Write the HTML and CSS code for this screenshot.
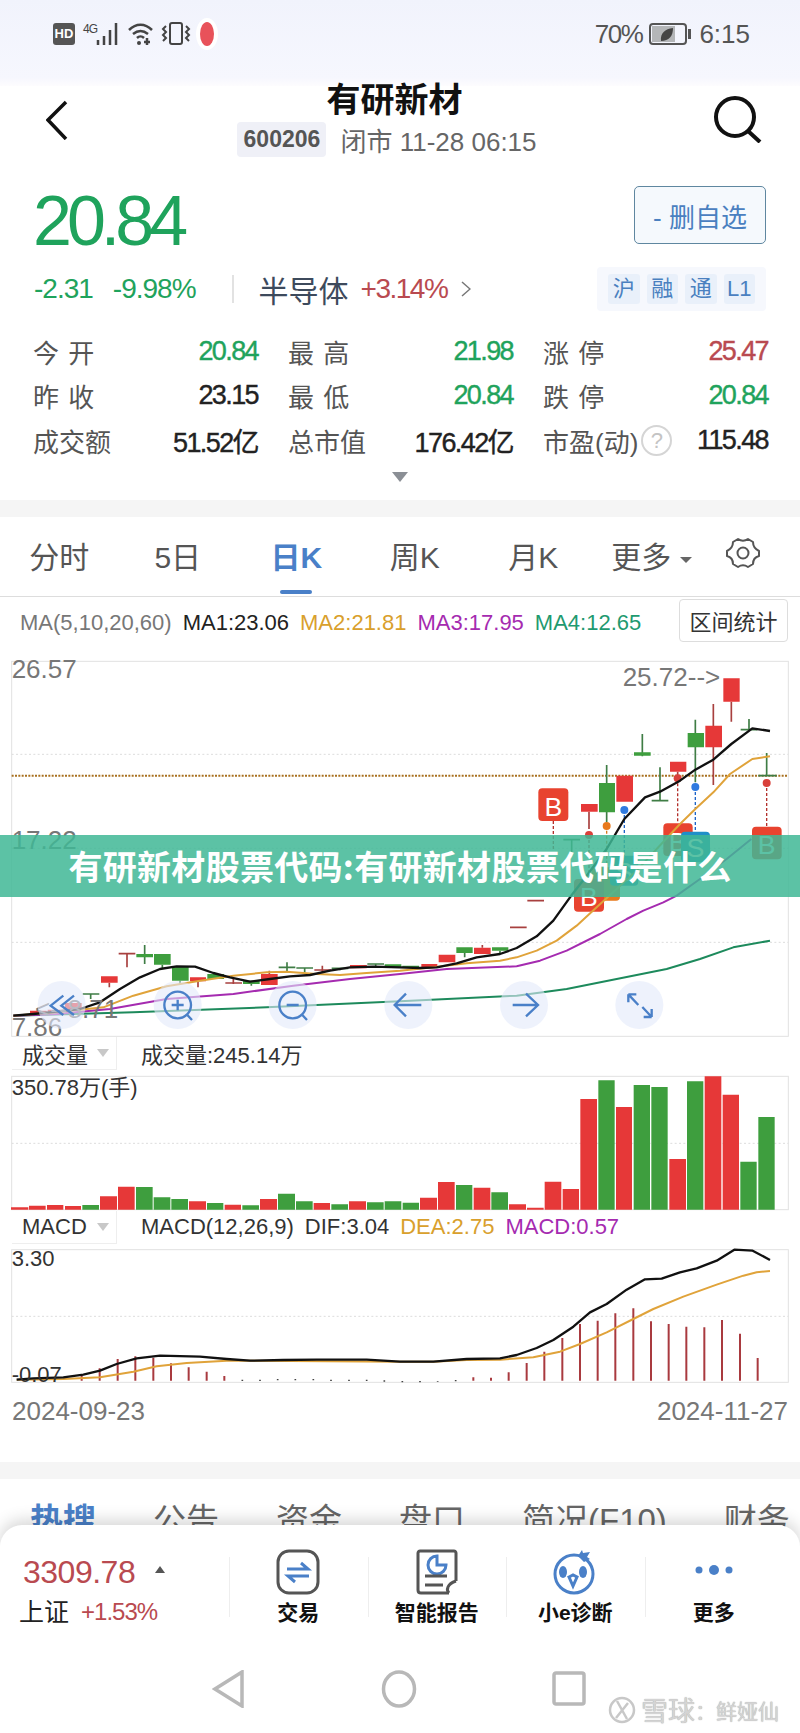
FILE: index.html
```html
<!DOCTYPE html>
<html lang="zh-CN">
<head>
  <meta charset="UTF-8">
  <meta name="viewport" content="width=device-width, initial-scale=1.0">
  <title>有研新材</title>
  <link rel="stylesheet" href="styles.css">
</head>
<body>
  <div id="page">
    <div class="status">
      <div class="status-left">
        <span class="hd">HD</span>
        <span class="net">4G</span>
        <svg class="signal" width="25" height="24" viewBox="0 0 25 24"><path d="M2 18v5M8 14v9M14 8v15M20 1v22" /></svg>
        <svg class="wifi" width="27" height="24" viewBox="0 0 27 24"><path d="M2 8c7-7 16-7 23 0M6 12c5-4 10-4 15 0M10 16c2-2 5-2 7 0" /><circle cx="12" cy="21" r="2" /><path d="M20 16v7M17 20h6" /></svg>
        <svg class="vibrate" width="30" height="24" viewBox="0 0 30 24"><rect x="9" y="1" width="12" height="21" rx="2" /><path d="M5 4l-3 3 3 3-3 3 3 3-3 3M25 4l3 3-3 3 3 3-3 3 3 3" /></svg>
        <span class="blob"></span>
      </div>
      <div class="status-right">
        <span class="batt-pct">70%</span>
        <svg width="43" height="24" viewBox="0 0 43 24"><rect x="1" y="2" width="36" height="20" rx="3" class="bat-box" /><rect x="3" y="4" width="23" height="16" fill="#b4b6b8" /><path d="M12 19c-1-8 4-12 12-13 0 8-4 13-12 13z" fill="#444" /><rect x="39" y="7" width="3" height="10" fill="#555" /></svg>
        <span class="clock">6:15</span>
      </div>
    </div>

    <div class="topbar">
      <svg class="back" width="22" height="40" viewBox="0 0 22 40"><path d="M20 2L2 20l18 19" /></svg>
      <div class="heading">
        <h1>有研新材</h1>
        <div class="sub"><span class="code">600206</span><span>闭市 11-28 06:15</span></div>
      </div>
      <svg class="search" width="50" height="48" viewBox="0 0 50 48"><circle cx="22" cy="22" r="19" /><path d="M35 36l12 11" /></svg>
    </div>

    <div class="quote">
      <div class="price-row">
        <div class="price">20.84</div>
        <button class="watch">- 删自选</button>
      </div>
      <div class="change-row">
        <div class="change">
          <span class="green">-2.31</span>
          <span class="green pct">-9.98%</span>
          <i class="vline"></i>
          <span class="sector">半导体</span>
          <span class="red sector-pct">+3.14%</span>
          <svg width="10" height="16" viewBox="0 0 10 16" class="more-arrow"><path d="M1 1l8 7-8 7" /></svg>
        </div>
        <div class="tags"><span>沪</span><span>融</span><span>通</span><span>L1</span></div>
      </div>
    </div>

    <div class="stats">
      <div class="stat"><span class="spaced">今 开</span><b class="green">20.84</b></div>
      <div class="stat"><span class="spaced">最 高</span><b class="green">21.98</b></div>
      <div class="stat"><span class="spaced">涨 停</span><b class="red">25.47</b></div>
      <div class="stat"><span class="spaced">昨 收</span><b>23.15</b></div>
      <div class="stat"><span class="spaced">最 低</span><b class="green">20.84</b></div>
      <div class="stat"><span class="spaced">跌 停</span><b class="green">20.84</b></div>
      <div class="stat"><span>成交额</span><b>51.52亿</b></div>
      <div class="stat"><span>总市值</span><b>176.42亿</b></div>
      <div class="stat"><span>市盈(动)<i class="help">?</i></span><b>115.48</b></div>
    </div>
    <div class="expand"><i></i></div>
    <div class="band"></div>

    <div class="tabs">
      <span class="tab">分时</span>
      <span class="tab">5日</span>
      <span class="tab active">日K</span>
      <span class="tab">周K</span>
      <span class="tab">月K</span>
      <span class="tab">更多<i class="caret"></i></span>
      <svg class="gear" width="36" height="34" viewBox="0 0 36 34"><path d="M13 3c3 2 7 2 10 0l5 3c0 4 2 7 6 9v5c-4 1-6 4-6 8l-5 3c-3-2-7-2-10 0l-5-3c0-4-2-7-6-8v-5c4-2 6-5 6-9z" /><circle cx="18" cy="17" r="5.5" /></svg>
    </div>

    <div class="ma-row">
      <span class="gray">MA(5,10,20,60)</span>
      <span>MA1:23.06</span>
      <span class="c-orange">MA2:21.81</span>
      <span class="c-purple">MA3:17.95</span>
      <span class="c-teal">MA4:12.65</span>
      <button class="range">区间统计</button>
    </div>

    <svg class="chart main-chart" viewBox="0 0 2400 1164">
      <rect class="frame" x="35" y="37" width="2330" height="1125" />
      <path class="grid" d="M35 316H2365M35 598H2365M35 880H2365" />
      <path class="limit" d="M35 380H2365" />

      <path class="wick-r" d="M328 1001V1015M381 914V955M594 997V1015M700 985V1005M808 965V975M967 950V972M356 914H406M676 1002H726M943 963H993M1050 952H1100M1530 835H1580M1582 755H1632M1767 488V540M2033 368V388M2140 165V408M2194 158V218M1447 888V896" />
      <path class="wick-g" d="M272 1035V1050M248 1035H298M434 888V945M487 947V960M540 995V1005M754 1005V1010M861 940V970M836 955H886M914 957V970M889 957H939M1020 958V964M995 958H1045M1127 945V955M1102 945H1152M1394 912V925M1500 905V915M1715 572V615M1690 572H1740M1820 348V520M1927 255V322M1980 355V455M1955 455H2005M2086 212V400M2247 210V245M2222 242H2272M2300 312V380M2275 380H2330" />
      <path class="body-g" d="M409 915H459V925H409zM462 915H512V947H462zM516 952H566V995H516zM622 975H672V990H622zM729 995H779V1005H729zM1154 946H1204V955H1154zM1207 950H1257V957H1207zM1369 895H1418V912H1369zM1476 895H1525V905H1476zM1797 402H1845V490H1797zM1902 310H1952V320H1902zM2063 252H2112V295H2063z" />
      <path class="body-r" d="M90 1085H140V1095H90zM143 1082H193V1090H143zM195 1062H245V1080H195zM303 982H353V1001H303zM570 985H618V997H570zM783 975H833V1008H783zM1050 948H1100V958H1050zM1264 945H1312V955H1264zM1316 917H1366V940H1316zM1422 896H1472V915H1422zM1743 465H1793V488H1743zM1849 380H1899V458H1849zM2010 338H2059V368H2010zM2116 230H2166V295H2116zM2170 88H2219V158H2170z" />

      <path class="drop-r" d="M1660 516V600M1767 558V690M2033 388V523M2300 402V533" />
      <path class="drop-o" d="M1820 530V650" />
      <path class="drop-b" d="M1873 483V620M2086 414V548" />
      <circle class="dot-r" cx="1767" cy="558" r="12" />
      <circle class="dot-o" cx="1820" cy="531" r="12" />
      <circle class="dot-b" cx="1873" cy="483" r="12" />
      <circle class="dot-r" cx="2033" cy="388" r="12" />
      <circle class="dot-b" cx="2086" cy="414" r="12" />
      <circle class="dot-r" cx="2300" cy="402" r="12" />
      <g class="flag flag-o"><rect x="1775" y="655" width="85" height="100" rx="12" /></g>
      <g class="flag flag-b"><rect x="1830" y="620" width="85" height="90" rx="12" /><text x="1872" y="695">S</text></g>
      <g class="flag flag-r"><rect x="1615" y="418" width="90" height="98" rx="12" /><text x="1660" y="500">B</text></g>
      <g class="flag flag-r"><rect x="1722" y="690" width="90" height="98" rx="12" /><text x="1767" y="772">B</text></g>
      <g class="flag flag-r"><rect x="1990" y="523" width="88" height="98" rx="12" /><text x="2033" y="605">B</text></g>
      <g class="flag flag-b"><rect x="2043" y="548" width="87" height="92" rx="12" /><text x="2086" y="625">S</text></g>
      <g class="flag flag-r"><rect x="2256" y="533" width="89" height="98" rx="12" /><text x="2300" y="615">B</text></g>

      <path class="ln ln-green" d="M40 1100L400 1090 800 1075 1200 1057 1550 1040 1700 1020 1850 990 2000 960 2100 930 2200 895 2310 875" />
      <path class="ln ln-purple" d="M40 1100L170 1095 330 1080 500 1050 700 1035 880 1010 1050 990 1200 975 1340 960 1550 952 1620 935 1700 905 1800 855 1880 810 1930 785 1990 760 2030 740 2100 690 2180 630 2254 570" />
      <path class="ln ln-orange" d="M40 1100L170 1090 310 1075 400 1040 500 1012 600 995 700 980 800 970 860 968 950 975 1020 978 1100 972 1200 965 1300 955 1400 943 1500 935 1550 925 1610 905 1670 875 1730 830 1790 775 1850 720 1910 665 1970 600 2040 525 2086 480 2140 430 2190 375 2257 330 2310 322" />
      <path class="ln ln-black" d="M40 1100L100 1095 170 1088 240 1080 300 1060 360 1020 420 985 480 960 530 952 585 953 640 972 690 985 750 998 810 990 870 982 930 978 990 965 1050 955 1120 953 1200 955 1260 957 1310 955 1370 943 1430 925 1500 915 1550 897 1610 862 1660 815 1710 745 1760 680 1820 600 1873 510 1935 445 1980 428 2040 395 2086 362 2140 332 2194 285 2257 238 2310 246" />

      <text class="axis" x="35" y="88">26.57</text>
      <text class="axis" x="35" y="600">17.22</text>
      <text class="axis" x="35" y="1160">7.86</text>
      <text class="axis" x="105" y="1108">&lt;--8.71</text>
      <text class="axis" x="1868" y="112">25.72--&gt;</text>

      <circle class="pad" cx="185" cy="1068" r="72" />
      <circle class="pad" cx="533" cy="1068" r="72" />
      <circle class="pad" cx="878" cy="1068" r="72" />
      <circle class="pad" cx="1225" cy="1068" r="72" />
      <circle class="pad" cx="1572" cy="1068" r="72" />
      <circle class="pad" cx="1918" cy="1068" r="72" />
      <path class="pad-icon" d="M190 1040l-38 30 38 28M222 1040l-38 30 38 28" />
      <circle class="pad-icon" cx="533" cy="1068" r="40" />
      <path class="pad-icon" d="M515 1068h36M533 1052v32M562 1098l14 15" />
      <circle class="pad-icon" cx="878" cy="1068" r="40" />
      <path class="pad-icon" d="M860 1068h36M907 1098l14 15" />
      <path class="pad-icon" d="M1264 1068h-80M1218 1034l-34 34 34 34" />
      <path class="pad-icon" d="M1538 1068h76M1578 1034l36 34-36 34" />
      <path class="pad-icon" d="M1885 1036l30 32M1885 1036v24M1885 1036h24M1955 1104l-28-30M1955 1104v-24M1955 1104h-24" />
    </svg>

    <div class="pane-head">
      <span class="pick">成交量<i class="pick-caret"></i></span>
      <div class="pane-values"><span>成交量:245.14万</span></div>
    </div>
    <svg class="chart vol-chart" viewBox="0 48 2400 408">
      <rect class="frame" x="35" y="52" width="2330" height="400" />
      <path class="grid" d="M35 253H2365" />
      <path class="body-r" d="M33 445H85V452H33zM87 440H137V452H87zM141 438H190V452H141zM195 441H243V452H195zM300 412H351V452H300zM354 383H404V452H354zM567 427H618V452H567zM674 437H723V452H674zM780 420H831V452H780zM941 432H990V452H941zM1047 427H1098V452H1047zM1260 416H1311V452H1260zM1314 369H1364V452H1314zM1421 386H1471V452H1421zM1527 436H1578V452H1527zM1581 446H1631V452H1581zM1634 368H1684V452H1634zM1688 390H1737V452H1688zM1741 120H1791V452H1741zM1848 144H1896V452H1848zM2008 300H2058V452H2008zM2114 52H2164V452H2114zM2168 107H2217V452H2168z" />
      <path class="body-g" d="M247 438H297V452H247zM408 384H458V452H408zM461 415H511V452H461zM514 420H564V452H514zM621 432H670V452H621zM727 439H777V452H727zM834 404H885V452H834zM888 427H938V452H888zM994 436H1044V452H994zM1101 430H1151V452H1101zM1154 427H1204V452H1154zM1208 431H1257V452H1208zM1368 378H1417V452H1368zM1474 400H1524V452H1474zM1795 64H1844V452H1795zM1901 78H1950V452H1901zM1954 84H2003V452H1954zM2061 67H2110V452H2061zM2221 308H2270V452H2221zM2275 174H2324V452H2275z" />
      <text class="axis-sm" x="35" y="108">350.78万(手)</text>
    </svg>

    <div class="pane-head">
      <span class="pick">MACD<i class="pick-caret"></i></span>
      <div class="pane-values">
        <span>MACD(12,26,9)</span>
        <span>DIF:3.04</span>
        <span class="c-orange">DEA:2.75</span>
        <span class="c-purple">MACD:0.57</span>
      </div>
    </div>
    <svg class="chart macd-chart" viewBox="0 570 2400 405">
      <rect class="frame" x="35" y="572" width="2330" height="398" />
      <path class="grid" d="M35 772H2365" />
      <path class="hist" d="M245 965V945M299 965V928M353 965V900M406 965V892M460 965V896M513 965V913M566 965V925M620 965V938M673 965V951M1420 965V955M1473 965V956M1526 965V940M1580 965V912M1633 965V878M1687 965V837M1740 965V795M1793 965V785M1846 965V763M1900 965V748M1953 965V787M2006 965V795M2059 965V803M2113 965V805M2166 965V783M2220 965V824M2273 965V897" />
      <path class="ticks" d="M727 962v4M780 962v4M833 960v4M886 960v4M940 960v4M993 962v4M1047 962v4M1100 962v4M1153 964v4M1207 966v4M1260 966v4M1313 966v2M1367 963v4" />
      <path class="ln ln-orange" d="M50 962L190 960 300 955 400 938 470 922 560 912 680 905 1200 908 1300 908 1400 903 1500 902 1600 895 1680 878 1740 855 1820 820 1900 780 1960 750 2050 713 2150 677 2230 650 2270 640 2310 636" />
      <path class="ln ln-black" d="M50 962L100 958 190 955 250 947 300 935 350 915 410 898 480 890 600 893 680 900 750 905 850 903 950 902 1100 902 1200 908 1300 908 1400 900 1500 898 1550 888 1610 867 1660 843 1720 803 1770 760 1820 735 1880 692 1935 661 1985 659 2040 640 2090 628 2150 605 2203 572 2258 575 2310 603" />
      <text class="axis-sm" x="35" y="622">3.30</text>
      <text class="axis-sm" x="35" y="968">-0.07</text>
    </svg>

    <div class="dates"><span>2024-09-23</span><span>2024-11-27</span></div>
    <div class="band"></div>

    <div class="info-tabs">
      <span class="active">热搜</span>
      <span>公告</span>
      <span>资金</span>
      <span>盘口</span>
      <span>简况(F10)</span>
      <span>财务</span>
    </div>

    <div class="banner">有研新材股票代码:有研新材股票代码是什么</div>

    <div class="dock">
      <div class="dock-row">
        <div class="index">
          <div class="index-top"><span class="red">3309.78</span><i class="up-caret"></i></div>
          <div class="index-bottom"><span>上证</span><span class="red small">+1.53%</span></div>
        </div>
        <div class="tool">
          <svg width="44" height="46" viewBox="0 0 44 46"><rect x="2" y="2" width="40" height="42" rx="11" class="ic-gray" /><path class="ic-blue" d="M11 20h21l-7-6M33 27H12l7 6" /></svg>
          <span>交易</span>
        </div>
        <div class="tool">
          <svg width="44" height="46" viewBox="0 0 44 46"><path class="ic-gray" d="M34 44H6c-2 0-3-1-3-3V4c0-1 1-2 2-2h34c1 0 2 1 2 2v28" /><path class="ic-gray" d="M34 44c-3-3-2-9 7-12" /><path class="ic-blue" d="M22 7a9 9 0 1 0 9 9h-9z" /><path class="ic-gray" d="M10 27h22M10 36h18" /></svg>
          <span>智能报告</span>
        </div>
        <div class="tool">
          <svg width="44" height="46" viewBox="0 0 44 46"><circle class="ic-blue" cx="21" cy="25" r="19" /><path class="ic-fill" d="M25 7l4-6 1 3 7-1-3 5 3 2-6 3z" /><ellipse class="ic-fill" cx="10" cy="23" rx="4" ry="6" /><ellipse class="ic-fill" cx="30" cy="23" rx="4" ry="6" /><path class="ic-blue" d="M16 28l4-2 4 2-4 9z" /></svg>
          <span>小e诊断</span>
        </div>
        <div class="tool">
          <svg width="44" height="46" viewBox="0 0 44 46"><circle class="ic-fill" cx="7" cy="21" r="3.5" /><circle class="ic-fill" cx="22" cy="21" r="5" /><circle class="ic-fill" cx="37" cy="21" r="3.5" /></svg>
          <span>更多</span>
        </div>
      </div>
      <div class="sys-nav">
        <svg width="34" height="38" viewBox="0 0 34 38"><path d="M30 2L3 19l27 17z" /></svg>
        <svg width="36" height="38" viewBox="0 0 36 38"><ellipse cx="18" cy="19" rx="15.500" ry="17" /></svg>
        <svg width="34" height="36" viewBox="0 0 34 36"><rect x="2" y="2" width="30" height="31" rx="2" /></svg>
      </div>
      <div class="watermark">
        <svg width="28" height="28" viewBox="0 0 28 28"><circle cx="14" cy="14" r="12" /><path d="M9 5l10 18M20 7L8 22" /></svg>
        <span class="wm-big">雪球</span><span class="wm-small">：鲜娅仙</span>
      </div>
    </div>
  </div>
</body>
</html>
```

FILE: styles.css
```css
* {
  box-sizing: border-box;
}

body {
  margin: 0;
  background: #fff;
  color: #222;
  font-family: "Liberation Sans", "Noto Sans CJK SC", sans-serif;
}

i {
  font-style: normal;
}

#page {
  position: relative;
  width: 800px;
  height: 1733px;
  overflow: hidden;
}

.green { color: #1fa35c; }
.red { color: #b94a50; }
.gray { color: #777; }
.c-orange { color: #d9a02c; }
.c-purple { color: #a52bb0; }
.c-teal { color: #1f9a70; }

/* status bar */
.status {
  height: 86px;
  padding: 20px 50px 0 53px;
  display: flex;
  justify-content: space-between;
  align-items: flex-start;
  background: linear-gradient(#f1f3fc, #f6f7fe 90%, #fdfcfe);
}

.status-left {
  display: flex;
  align-items: center;
  height: 28px;
}

.hd {
  width: 22px;
  height: 22px;
  margin-right: 8px;
  background: #555;
  border-radius: 3px;
  color: #fff;
  font-size: 13px;
  font-weight: bold;
  line-height: 22px;
  text-align: center;
}

.net {
  width: 13px;
  margin-top: -10px;
  font-size: 12px;
  letter-spacing: -1px;
  color: #444;
}

.signal path,
.wifi path,
.vibrate path,
.vibrate rect {
  fill: none;
  stroke: #444;
  stroke-width: 2.5;
}

.wifi {
  margin-left: 6px;
}

.wifi circle {
  fill: #444;
}

.vibrate {
  margin-left: 7px;
}

.vibrate path,
.vibrate rect {
  stroke-width: 2;
}

.blob {
  width: 14px;
  height: 24px;
  margin-left: 9px;
  background: #e8525a;
  border-radius: 50%;
  box-shadow: 0 0 0 4px #fff;
}

.status-right {
  display: flex;
  align-items: center;
  gap: 7px;
  height: 28px;
  font-size: 26px;
  color: #555;
}

.batt-pct {
  letter-spacing: -1.500px;
}

.bat-box {
  fill: none;
  stroke: #555;
  stroke-width: 2;
}

/* title */
.topbar {
  height: 76px;
  margin-top: -4px;
  padding: 0 37px 0 46px;
  display: grid;
  grid-template-columns: 1fr auto 1fr;
  align-items: center;
}

.back path {
  fill: none;
  stroke: #111;
  stroke-width: 3.5;
}

.search {
  justify-self: end;
  margin-top: -2px;
}

.search circle,
.search path {
  fill: none;
  stroke: #111;
  stroke-width: 4;
}

.heading {
  margin-left: -35px;
  text-align: center;
}

h1 {
  margin: 0;
  padding-left: 15px;
  font-size: 34px;
  line-height: 36px;
  color: #111;
}

.sub {
  margin-top: 3px;
  display: flex;
  align-items: center;
  gap: 14px;
  font-size: 26px;
  color: #666;
}

.code {
  width: 89px;
  height: 35px;
  background: #eff0f7;
  border-radius: 4px;
  color: #555;
  font-size: 23px;
  font-weight: bold;
  line-height: 35px;
}

/* quote */
.quote {
  padding: 28px 34px 0;
}

.price-row {
  display: flex;
  justify-content: space-between;
  align-items: flex-start;
}

.price {
  margin-left: -1px;
  font-size: 70px;
  line-height: 70px;
  letter-spacing: -5px;
  color: #1fa35c;
}

.watch {
  width: 132px;
  height: 58px;
  padding: 0;
  background: #f5f9fd;
  border: 1px solid #5f87a0;
  border-radius: 5px;
  color: #4a80c0;
  font: 26px "Liberation Sans", "Noto Sans CJK SC", sans-serif;
}

.change-row {
  margin-top: 11px;
  display: flex;
  justify-content: space-between;
  align-items: center;
}

.change {
  display: flex;
  align-items: center;
  font-size: 28px;
  letter-spacing: -1px;
}

.pct {
  margin-left: 20px;
}

.vline {
  width: 2px;
  height: 28px;
  margin: 0 25px 0 36px;
  background: #e2e2e2;
}

.sector {
  font-size: 30px;
  letter-spacing: 0;
  color: #3d4a5c;
}

.sector-pct {
  margin-left: 12px;
  letter-spacing: -1.500px;
}

.more-arrow {
  margin-left: 14px;
}

.more-arrow path {
  fill: none;
  stroke: #777;
  stroke-width: 1.5;
}

.tags {
  width: 169px;
  height: 44px;
  padding: 7px 11px;
  display: flex;
  gap: 7px;
  background: #f6f8fd;
  border-radius: 4px;
}

.tags span {
  flex: 1;
  background: #e9f0fa;
  border-radius: 3px;
  color: #4a80c0;
  font-size: 22px;
  line-height: 30px;
  text-align: center;
}

/* stats */
.stats {
  margin-top: 18px;
  padding: 0 32px 0 35px;
  display: grid;
  grid-template-columns: repeat(3, 223px);
  column-gap: 32px;
  grid-auto-rows: 44.500px;
}

.stat {
  display: flex;
  justify-content: space-between;
  align-items: center;
  font-size: 26px;
  color: #555;
}

.stat > span {
  display: flex;
  align-items: center;
  margin-left: -2px;
}

.spaced {
  letter-spacing: 1px;
}

.stat b {
  font-size: 27px;
  font-weight: normal;
  letter-spacing: -1.600px;
  -webkit-text-stroke: 0.4px currentColor;
  color: #222;
}

.stat b.green { color: #1fa35c; }
.stat b.red { color: #b94a50; }

.help {
  width: 31px;
  height: 31px;
  margin-left: 3px;
  border: 2px solid #d5d5d5;
  border-radius: 50%;
  color: #c4c4c4;
  font-size: 22px;
  line-height: 27px;
  text-align: center;
}

.expand {
  height: 37px;
  padding-top: 9px;
  display: flex;
  justify-content: center;
}

.expand i {
  width: 0;
  height: 0;
  border-left: 8px solid transparent;
  border-right: 8px solid transparent;
  border-top: 10px solid #8b8f95;
}

.band {
  height: 17px;
  background: #f5f5f5;
}

/* period tabs */
.tabs {
  height: 80px;
  display: flex;
  align-items: center;
  border-bottom: 1px solid #ddd;
}

.tab {
  position: relative;
  flex: 0 0 118.500px;
  padding-top: 4px;
  text-align: center;
  font-size: 30px;
  line-height: 76px;
  color: #555;
}

.tab.active {
  color: #4a80c8;
  font-weight: bold;
}

.tab.active::after {
  content: "";
  position: absolute;
  left: 43px;
  bottom: 2px;
  width: 32px;
  height: 4px;
  background: #4a80c8;
  border-radius: 2px;
}

.caret {
  display: inline-block;
  margin-left: 9px;
  vertical-align: 5px;
  border-left: 6px solid transparent;
  border-right: 6px solid transparent;
  border-top: 6px solid #666;
}

.gear {
  margin: -6px 0 0 14px;
}

.gear path,
.gear circle {
  fill: none;
  stroke: #555;
  stroke-width: 2;
  stroke-linejoin: round;
}

.ma-row {
  height: 52px;
  padding: 0 12px 0 20px;
  display: flex;
  align-items: center;
  gap: 11px;
  font-size: 22px;
}

.range {
  width: 109px;
  height: 43px;
  margin: -5px 0 0 auto;
  padding: 0;
  background: #fff;
  border: 1px solid #ddd;
  border-radius: 4px;
  color: #333;
  font: 22px "Liberation Sans", "Noto Sans CJK SC", sans-serif;
}

/* charts are drawn in 3x units */
.chart {
  display: block;
  width: 800px;
  overflow: visible;
}

.main-chart { height: 388px; }
.vol-chart { height: 136px; }
.macd-chart { height: 135px; }

.frame {
  fill: none;
  stroke: #e2e2e2;
  stroke-width: 3;
}

.grid {
  fill: none;
  stroke: #ddd;
  stroke-width: 3;
  stroke-dasharray: 6 7;
}

.limit {
  fill: none;
  stroke: #a8701f;
  stroke-width: 6;
  stroke-dasharray: 6 4;
}

.body-r { fill: #e63838; }
.body-g { fill: #3e9e3e; }

.wick-r,
.wick-g,
.hist,
.ticks,
.ln,
.pad-icon,
.drop-r,
.drop-o,
.drop-b {
  fill: none;
}

.wick-r { stroke: #a8403f; stroke-width: 5; }
.wick-g { stroke: #3f7d45; stroke-width: 5; }

.drop-r,
.drop-o,
.drop-b {
  stroke-width: 4;
  stroke-dasharray: 9 6;
}

.drop-r { stroke: #b3302c; }
.drop-o { stroke: #d97a1c; }
.drop-b { stroke: #1d64c8; }

.dot-r { fill: #d9403a; }
.dot-o { fill: #e8791c; }
.dot-b { fill: #2f7ae0; }

.flag text {
  fill: #fff;
  font-size: 80px;
  text-anchor: middle;
}

.flag-r rect { fill: #e8432f; }
.flag-o rect { fill: #e8791c; }
.flag-b rect { fill: #1f8fc8; }

.ln { stroke-width: 6; stroke-linejoin: round; }
.ln-black { stroke: #111; stroke-width: 7; }
.ln-orange { stroke: #e0a33a; }
.ln-purple { stroke: #a52bb0; }
.ln-green { stroke: #1d8a5c; }

.axis {
  fill: #777;
  font-size: 78px;
}

.axis-sm {
  fill: #333;
  font-size: 66px;
}

.pad {
  fill: rgba(226, 233, 250, 0.6);
}

.pad-icon {
  stroke: #4a80c8;
  stroke-width: 7;
}

.hist { stroke: #a93a3f; stroke-width: 6; }
.ticks { stroke: #444; stroke-width: 5; }

.pane-head {
  height: 38px;
  display: flex;
  align-items: flex-start;
  font-size: 22px;
  color: #333;
}

.pick {
  width: 105px;
  height: 33px;
  margin-left: 12px;
  padding-left: 10px;
  display: flex;
  align-items: center;
  justify-content: space-between;
  padding-right: 7px;
  border-right: 1px solid #eee;
  border-bottom: 1px solid #eee;
}

.pick-caret {
  border-left: 6px solid transparent;
  border-right: 6px solid transparent;
  border-top: 8px solid #c8c8c8;
}

.pane-values {
  height: 33px;
  margin-left: 24px;
  display: flex;
  align-items: center;
  gap: 11px;
}

.dates {
  height: 78px;
  padding: 12px 12px 0;
  display: flex;
  justify-content: space-between;
  font-size: 26px;
  line-height: 30px;
  color: #777;
}

.info-tabs {
  height: 80px;
  padding: 22px 0 0 30px;
  display: flex;
  white-space: nowrap;
  font-size: 33px;
  line-height: 40px;
  color: #666;
}

.info-tabs span {
  margin-right: 57px;
}

.info-tabs .active {
  color: #4a80c8;
  font-weight: bold;
}

/* overlays */
.banner {
  position: absolute;
  left: 0;
  top: 835px;
  width: 100%;
  height: 62px;
  padding-bottom: 1px;
  display: flex;
  justify-content: center;
  align-items: center;
  background: rgba(63, 183, 149, 0.85);
  color: #fff;
  font-family: "Noto Sans CJK SC", sans-serif;
  font-size: 34px;
  font-weight: bold;
  letter-spacing: 0.300px;
}

.dock {
  position: absolute;
  left: 0;
  top: 1525px;
  width: 100%;
  height: 208px;
  background: #fff;
  border-radius: 22px 22px 0 0;
  box-shadow: 0 -5px 16px rgba(0, 0, 0, 0.16);
}

.dock-row {
  height: 110px;
  padding-top: 24px;
  display: flex;
}

.index {
  flex: 0 0 229px;
  padding: 4px 0 0 19px;
}

.index-top {
  padding-left: 4px;
  display: flex;
  align-items: center;
  font-size: 32px;
  line-height: 38px;
  letter-spacing: -0.500px;
}

.up-caret {
  margin: -6px 0 0 20px;
  border-left: 5px solid transparent;
  border-right: 5px solid transparent;
  border-bottom: 7px solid #555;
}

.index-bottom {
  margin-top: 4px;
  display: flex;
  align-items: center;
  gap: 12px;
  font-size: 25px;
  line-height: 34px;
}

.small {
  font-size: 24px;
  letter-spacing: -1px;
}

.tool {
  position: relative;
  flex: 0 0 138.500px;
  display: flex;
  flex-direction: column;
  align-items: center;
  font-size: 21px;
  font-weight: bold;
  line-height: 30px;
  color: #111;
}

.tool span {
  margin-top: 3px;
}

.tool::before {
  content: "";
  position: absolute;
  left: 0;
  top: 8px;
  height: 60px;
  width: 1px;
  background: #eee;
}

.ic-gray,
.ic-blue {
  fill: none;
  stroke-width: 3;
}

.ic-gray { stroke: #555; }
.ic-blue { stroke: #4a80c8; }
.ic-fill { fill: #4a80c8; }

.sys-nav {
  margin-top: 35px;
  padding-left: 212px;
  display: flex;
  align-items: center;
  gap: 135px;
}

.sys-nav path,
.sys-nav ellipse,
.sys-nav rect {
  fill: none;
  stroke: #b8b8b8;
  stroke-width: 3.5;
}

.watermark {
  position: absolute;
  left: 608px;
  top: 165px;
  display: flex;
  align-items: center;
  color: #d4d4d4;
  text-shadow: 0 0 1px #999;
}

.watermark svg {
  margin-right: 5px;
}

.watermark circle,
.watermark path {
  fill: none;
  stroke: #c8c8c8;
  stroke-width: 2.5;
}

.wm-big {
  font-size: 27px;
}

.wm-small {
  font-size: 21px;
}
```
